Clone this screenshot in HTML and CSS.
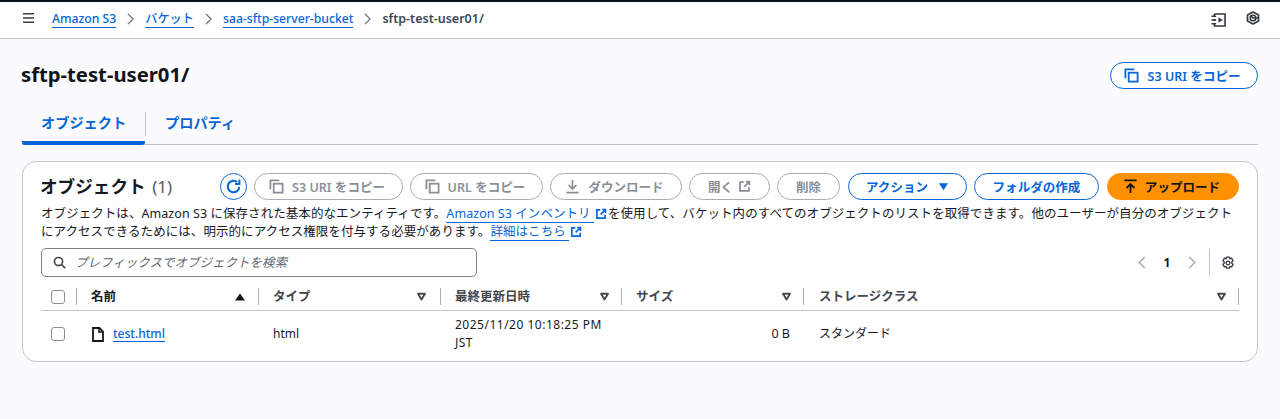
FILE: index.html
```html
<!DOCTYPE html>
<html lang="ja">
<head>
<meta charset="utf-8">
<title>sftp-test-user01/</title>
<link rel="stylesheet" href="styles.css">
</head>
<body>
<svg class="defs" width="0" height="0" aria-hidden="true">
  <symbol id="copy" viewBox="0 0 16 16"><path d="M1.500 11V1.500H11" fill="none" stroke="currentColor" stroke-width="1.900"/><rect x="5" y="5" width="9.500" height="9.500" fill="none" stroke="currentColor" stroke-width="1.900"/></symbol>
  <symbol id="ext" viewBox="0 0 16 16"><path d="M7 2.500H2.500v11h11V9M9.500 2h4.500v4.500M14 2L7.500 8.500" fill="none" stroke="currentColor" stroke-width="2.200"/></symbol>
  <symbol id="caret" viewBox="0 0 12 12"><path d="M2.200 3h7.600L6 9.200z" fill="none" stroke="currentColor" stroke-width="2" stroke-linejoin="round"/></symbol>
</svg>
<header class="topbar">
  <svg class="menu-icon" viewBox="0 0 14 12"><path d="M1 1.500h12M1 6h12M1 10.500h12" stroke="currentColor" stroke-width="1.600"/></svg>
  <nav class="crumbs">
    <a class="link" href="#">Amazon S3</a>
    <svg class="chev" viewBox="0 0 8 14"><path d="M1 1l6 6-6 6" fill="none" stroke="currentColor" stroke-width="1.500"/></svg>
    <a class="link" href="#">バケット</a>
    <svg class="chev" viewBox="0 0 8 14"><path d="M1 1l6 6-6 6" fill="none" stroke="currentColor" stroke-width="1.500"/></svg>
    <a class="link" href="#">saa-sftp-server-bucket</a>
    <svg class="chev" viewBox="0 0 8 14"><path d="M1 1l6 6-6 6" fill="none" stroke="currentColor" stroke-width="1.500"/></svg>
    <span class="crumb-current">sftp-test-user01/</span>
  </nav>
  <div class="top-tools">
    <svg class="tool-icon tool-book" viewBox="0 0 16 15"><path d="M3.500 1h11.500v13H3.500V11M3.500 4V1M3.500 6.500v2" fill="none" stroke="currentColor" stroke-width="1.700"/><path d="M.5 3.500h5M.5 7.500h5M.5 11.500h5" stroke="currentColor" stroke-width="1.700"/><path d="M8 4.500v6L12.500 7.500z" fill="currentColor"/></svg>
    <svg class="tool-icon tool-hex" viewBox="0 0 14 14"><path d="M7 1l5.500 3v6L7 13l-5.500-3V4z" fill="none" stroke="currentColor" stroke-width="1.700" stroke-linejoin="round"/><circle cx="7" cy="7" r="2.800" fill="none" stroke="currentColor" stroke-width="1.600"/><path d="M4.500 4.500L7 7h5" fill="none" stroke="currentColor" stroke-width="1.500"/></svg>
  </div>
</header>

<main class="page">
  <div class="title-row">
    <h1>sftp-test-user01/</h1>
    <button class="btn btn-normal btn-title btn-iconed"><svg class="ico"><use href="#copy"/></svg>S3 URI をコピー</button>
  </div>
  <div class="tabs">
    <a class="tab tab-active" href="#">オブジェクト</a>
    <a class="tab" href="#">プロパティ</a>
  </div>

  <section class="panel">
    <div class="panel-head">
      <h2>オブジェクト <span class="count">(1)</span></h2>
      <div class="actions">
        <button class="btn btn-normal btn-refresh" aria-label="更新"><svg class="ico-refresh" viewBox="0 0 16 16"><path d="M13.400 8.200A5.400 5.400 0 1 1 11.500 3.900" fill="none" stroke="currentColor" stroke-width="2"/><path d="M13.600 1.400v4.200H9.400" fill="none" stroke="currentColor" stroke-width="1.800"/></svg></button>
        <button class="btn btn-off btn-iconed w-s3"><svg class="ico"><use href="#copy"/></svg>S3 URI をコピー</button>
        <button class="btn btn-off btn-iconed w-url"><svg class="ico"><use href="#copy"/></svg>URL をコピー</button>
        <button class="btn btn-off btn-iconed w-dl"><svg class="ico" viewBox="0 0 16 16"><path d="M8 1v9M3.800 6.400L8 10.600l4.200-4.200M1.500 14.500h13" fill="none" stroke="currentColor" stroke-width="1.800"/></svg>ダウンロード</button>
        <button class="btn btn-off w-open">開く<svg class="ico ico-after"><use href="#ext"/></svg></button>
        <button class="btn btn-off w-del">削除</button>
        <button class="btn btn-normal w-act">アクション<svg class="ico-drop" viewBox="0 0 12 12"><path d="M1 2.500h10L6 10z" fill="currentColor"/></svg></button>
        <button class="btn btn-normal w-folder">フォルダの作成</button>
        <button class="btn btn-primary btn-iconed w-up"><svg class="ico" viewBox="0 0 16 16"><path d="M1.500 1.500h13M8 15V6M3.800 9.600L8 5.400l4.200 4.200" fill="none" stroke="currentColor" stroke-width="1.900"/></svg>アップロード</button>
      </div>
    </div>
    <div class="desc">
      <p class="desc-line">オブジェクトは、Amazon S3 に保存された基本的なエンティティです。<a class="link" href="#">Amazon S3 インベントリ </a><svg class="ico-ext"><use href="#ext"/></svg>を使用して、バケット内のすべてのオブジェクトのリストを取得できます。他のユーザーが自分のオブジェクト</p>
      <p class="desc-line">にアクセスできるためには、明示的にアクセス権限を付与する必要があります。<a class="link" href="#">詳細はこちら </a><svg class="ico-ext"><use href="#ext"/></svg></p>
    </div>

    <div class="filter-row">
      <label class="search">
        <svg class="search-ico" viewBox="0 0 16 16"><circle cx="6.800" cy="6.800" r="5" fill="none" stroke="currentColor" stroke-width="2"/><path d="M10.500 10.500l4.500 4.500" stroke="currentColor" stroke-width="2"/></svg>
        <span class="placeholder">プレフィックスでオブジェクトを検索</span>
      </label>
      <div class="pager">
        <svg class="pg-chev" viewBox="0 0 8 14"><path d="M7 1L1 7l6 6" fill="none" stroke="currentColor" stroke-width="1.600"/></svg>
        <span class="pg-num">1</span>
        <svg class="pg-chev" viewBox="0 0 8 14"><path d="M1 1l6 6-6 6" fill="none" stroke="currentColor" stroke-width="1.600"/></svg>
        <span class="pg-sep"></span>
        <svg class="gear" viewBox="0 0 16 16"><path d="M6.300 1.200h3.400l.5 2 1.900-.7 1.700 2.900-1.500 1.400v1.400l1.500 1.400-1.700 2.900-1.900-.7-.5 2H6.300l-.5-2-1.900.7-1.700-2.900 1.500-1.400V6.800L2.200 5.400l1.700-2.900 1.900.7z" fill="none" stroke="currentColor" stroke-width="1.500" stroke-linejoin="round"/><circle cx="8" cy="8" r="2.100" fill="none" stroke="currentColor" stroke-width="1.500"/></svg>
      </div>
    </div>

    <div class="table">
      <div class="row row-head">
        <div class="cell cell-check"><span class="check"></span></div>
        <div class="cell cell-name"><span class="th th-strong">名前</span><svg class="sort-up" viewBox="0 0 10 8"><path d="M5 .5L10 7.500H0z" fill="currentColor"/></svg></div>
        <div class="cell cell-type"><span class="th">タイプ</span><svg class="caret"><use href="#caret"/></svg></div>
        <div class="cell"><span class="th">最終更新日時</span><svg class="caret"><use href="#caret"/></svg></div>
        <div class="cell"><span class="th">サイズ</span><svg class="caret"><use href="#caret"/></svg></div>
        <div class="cell cell-last"><span class="th">ストレージクラス</span><svg class="caret"><use href="#caret"/></svg></div>
      </div>
      <div class="row row-body">
        <div class="td td-check"><span class="check"></span></div>
        <div class="td td-name">
          <svg class="file" viewBox="0 0 12 15"><path d="M1 1h6.500L11 4.500V14H1z" fill="none" stroke="currentColor" stroke-width="1.800"/><path d="M7 1v4h4" fill="none" stroke="currentColor" stroke-width="1.600"/></svg>
          <a class="link" href="#">test.html</a>
        </div>
        <div class="td td-pad">html</div>
        <div class="td td-pad td-date">2025/11/20 10:18:25 PM<br>JST</div>
        <div class="td td-size">0 B</div>
        <div class="td td-pad td-last">スタンダード</div>
      </div>
    </div>
  </section>
</main>
</body>
</html>
```
FILE: styles.css
```css
* { box-sizing: border-box; }
html, body { margin: 0; padding: 0; }
body {
  height: 419px;
  overflow: hidden;
  background: #fbfbfe;
  color: #16191f;
  font-family: "Noto Sans", "Noto Sans CJK JP", sans-serif;
  font-size: 12.5px;
}
.defs { position: absolute; }
a { text-decoration: none; }
.link { color: #0666d8; border-bottom: 1px solid #0666d8; }

.topbar {
  height: 39px;
  display: flex;
  align-items: center;
  padding: 0 20px 2px 22px;
  background: #fff;
  border-top: 2px solid #0f141a;
  border-bottom: 1px solid #c2c2c8;
}
.menu-icon { width: 13px; height: 12px; color: #3a3f47; margin-right: 17px; margin-top: -3px; }
.crumbs { display: flex; align-items: center; font-weight: 500; line-height: 16px; font-size: 12.2px; }
.chev { width: 7px; height: 12px; color: #6b7078; margin: 0 11px; }
.crumb-current { color: #414750; font-weight: 600; font-size: 12.5px; }
.top-tools { margin-left: auto; display: flex; gap: 20px; align-items: flex-start; }
.tool-icon { color: #333841; display: block; }
.tool-book { width: 15px; height: 14px; margin-top: 1px; }
.tool-hex { width: 14px; height: 14px; margin-top: -1px; }

.page { padding: 0 22px; }
.title-row {
  height: 71px;
  display: flex;
  align-items: center;
  justify-content: space-between;
}
h1 { margin: 0 0 2px -1px; font-size: 20.25px; font-weight: 700; line-height: 26px; color: #111419; }
.btn {
  height: 27px;
  display: inline-flex;
  align-items: center;
  justify-content: center;
  border-radius: 14px;
  border: 1px solid;
  background: #fff;
  padding: 0;
  font: 600 12.5px "Noto Sans", "Noto Sans CJK JP", sans-serif;
  letter-spacing: .05px;
  white-space: nowrap;
}
.btn-iconed { padding-right: 3px; }
.btn-normal { color: #0666d8; border-color: #0666d8; }
.btn-off { color: #8a8f97; border-color: #a9acb2; }
.btn-primary { color: #0f141a; background: #ff9000; border-color: #ff9000; }
.btn-title { width: 148px; margin-top: 1px; }
.ico { width: 15px; height: 15px; margin-right: 8px; }
.ico-after { margin: 0 0 0 5px; width: 13px; height: 13px; }
.ico-drop { width: 11px; height: 11px; margin-left: 10px; }
.ico-refresh { width: 17px; height: 17px; }

.tabs {
  display: flex;
  height: 35px;
  border-bottom: 1px solid #c2c2c8;
}
.tab {
  width: 123px;
  height: 35px;
  padding: 2px 0 0 19px;
  line-height: 22px;
  font-size: 14.2px;
  font-weight: 600;
  color: #0666d8;
  position: relative;
}
.tab-active { border-bottom: 4px solid #0666d8; border-radius: 2px 2px 3px 3px; height: 35px; }
.tab-active::after {
  content: "";
  position: absolute;
  top: 2px;
  right: -1px;
  width: 1px;
  height: 24px;
  background: #c2c2c8;
}
.tab + .tab { padding-left: 20px; }

.panel {
  margin-top: 16px;
  height: 201px;
  background: #fff;
  border: 1px solid #c4c4ca;
  border-radius: 14px;
  padding: 11px 18px 0 18px;
}
.panel-head { display: flex; align-items: center; justify-content: space-between; height: 27px; }
h2 { margin: 0 0 0 -1px; font-size: 17.6px; font-weight: 700; line-height: 26px; color: #16191f; }
.count { font-weight: 400; font-size: 17px; color: #545b64; margin-left: 2px; }
.actions { display: flex; gap: 7px; }
.btn-refresh { width: 27px; border-radius: 50%; }
.w-s3 { width: 149px; }
.w-url { width: 133px; }
.w-dl { width: 132px; }
.w-open { width: 81px; }
.w-del { width: 63px; margin-right: 1px; }
.w-act { width: 119px; }
.w-folder { width: 125px; margin-right: 1px; }
.w-up { width: 132px; }
.w-up .ico { margin-right: 7px; }

.desc {
  margin: 5px 0 0;
  line-height: 18px;
  font-size: 12.5px;
  letter-spacing: .06px;
  color: #16191f;
}
.desc-line { margin: 0; white-space: nowrap; }
.ico-ext { width: 12px; height: 12px; color: #0666d8; margin: 0 1px 0 1px; vertical-align: -2px; }

.filter-row { display: flex; align-items: center; justify-content: space-between; margin-top: 7px; height: 29px; }
.search {
  width: 436px;
  height: 29px;
  display: flex;
  align-items: center;
  padding: 0 0 2px 11px;
  border: 1px solid #7d8289;
  border-radius: 5px;
}
.search-ico { width: 13px; height: 13px; color: #414750; margin-right: 9px; margin-top: 1px; }
.placeholder { font-style: italic; color: #5f6670; }
.pager { display: flex; align-items: center; height: 27px; }
.pg-chev { width: 8px; height: 13px; color: #a9acb2; }
.pg-num { font-weight: 700; width: 42px; text-align: center; font-size: 12px; }
.pg-sep { width: 1px; height: 27px; background: #c2c2c8; margin: 0 11px 0 13px; }
.gear { width: 14px; height: 14px; color: #333841; margin-right: 4px; }

.table { margin-top: 7px; }
.row { display: grid; grid-template-columns: 36px 182px 182px 181px 182px 435px; }
.row-head { height: 27px; border-bottom: 1px solid #c2c2c8; align-items: center; width: 1198px; }
.cell {
  height: 17px;
  display: flex;
  align-items: center;
  justify-content: space-between;
  padding: 0 11px 0 14px;
  border-right: 1px solid #a9acb2;
  margin-top: -1px;
}
.cell-check { padding: 0 0 0 10px; justify-content: flex-start; }
.cell-name { padding-right: 13px; }
.cell-type { padding-right: 13px; }
.cell-last { padding-left: 15px; }
.th { color: #414750; font-weight: 600; line-height: 16px; }
.th-strong { color: #16191f; }
.sort-up { width: 10px; height: 8px; color: #0f141a; }
.caret { width: 11px; height: 11px; color: #414750; }
.check {
  display: block;
  width: 14px;
  height: 14px;
  border: 1px solid #8a8f97;
  border-radius: 3px;
  background: #fff;
}
.row-body { height: 46px; align-items: center; font-size: 12px; }
.td { line-height: 18px; color: #16191f; }
.td-check { padding-left: 10px; }
.td-name { padding-left: 15px; display: flex; align-items: center; gap: 9px; }
.td-name .link { line-height: 15px; font-weight: 500; }
.td-pad { padding-left: 14px; }
.td-last { padding-left: 15px; }
.td-date { letter-spacing: .5px; }
.td-size { text-align: right; padding-right: 14px; font-size: 12.5px; }
.file { width: 12px; height: 15px; color: #16191f; }
```
